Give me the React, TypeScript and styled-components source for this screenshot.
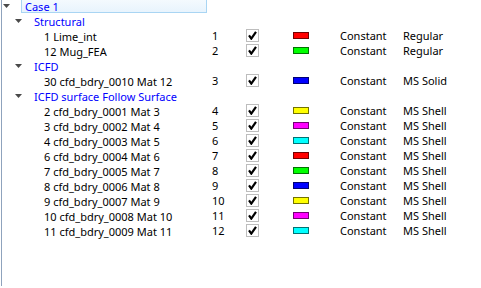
import React from 'react';
import styled, { createGlobalStyle } from 'styled-components';

const GlobalStyle = createGlobalStyle`
  html, body {
    margin: 0;
    padding: 0;
    background: #ffffff;
    overflow: hidden;
  }
  body {
    font-family: "Noto Sans", "Open Sans", sans-serif;
    font-size: 11px;
  }
`;

type Row = {
  level: number;
  label: string;
  expandable?: boolean;
  selected?: boolean;
  id?: number;
  color?: string;
  kind?: string;
};

const rows: Row[] = [
  { level: 0, label: 'Case 1', expandable: true, selected: true },
  { level: 1, label: 'Structural', expandable: true },
  { level: 2, label: '1 Lime_int', id: 1, color: '#ff0000', kind: 'Regular' },
  { level: 2, label: '12 Mug_FEA', id: 2, color: '#00ff00', kind: 'Regular' },
  { level: 1, label: 'ICFD', expandable: true },
  { level: 2, label: '30 cfd_bdry_0010 Mat 12', id: 3, color: '#0000ff', kind: 'MS Solid' },
  { level: 1, label: 'ICFD surface Follow Surface', expandable: true },
  { level: 2, label: '2 cfd_bdry_0001 Mat 3', id: 4, color: '#ffff00', kind: 'MS Shell' },
  { level: 2, label: '3 cfd_bdry_0002 Mat 4', id: 5, color: '#ff00ff', kind: 'MS Shell' },
  { level: 2, label: '4 cfd_bdry_0003 Mat 5', id: 6, color: '#00ffff', kind: 'MS Shell' },
  { level: 2, label: '6 cfd_bdry_0004 Mat 6', id: 7, color: '#ff0000', kind: 'MS Shell' },
  { level: 2, label: '7 cfd_bdry_0005 Mat 7', id: 8, color: '#00ff00', kind: 'MS Shell' },
  { level: 2, label: '8 cfd_bdry_0006 Mat 8', id: 9, color: '#0000ff', kind: 'MS Shell' },
  { level: 2, label: '9 cfd_bdry_0007 Mat 9', id: 10, color: '#ffff00', kind: 'MS Shell' },
  { level: 2, label: '10 cfd_bdry_0008 Mat 10', id: 11, color: '#ff00ff', kind: 'MS Shell' },
  { level: 2, label: '11 cfd_bdry_0009 Mat 11', id: 12, color: '#00ffff', kind: 'MS Shell' },
];

const Tree = styled.div`
  margin-left: 1px;
  height: 288px;
  border-left: 1px solid #8fa3bd;
  box-sizing: border-box;
`;

const Rows = styled.div`
  margin-top: -2px;
  display: flex;
  flex-direction: column;
`;

const RowLine = styled.div`
  display: grid;
  grid-template-columns: 210px 34px 47px 47px 63px 1fr;
  height: 15px;
  align-items: center;
  white-space: nowrap;
`;

const indent = [1, 13, 38];
const toggleWidth = [18, 15, 0];

const NameCell = styled.div<{ $level: number }>`
  display: flex;
  align-items: center;
  height: 15px;
  padding-left: ${({ $level }) => indent[$level]}px;
  padding-right: 5px;
`;

const Toggle = styled.span<{ $level: number }>`
  width: ${({ $level }) => toggleWidth[$level]}px;
  flex: none;
  display: flex;
  align-items: center;
  svg {
    display: block;
  }
`;

const Label = styled.span<{ $selected?: boolean; $group?: boolean }>`
  flex: ${({ $selected }) => ($selected ? '1' : 'none')};
  box-sizing: border-box;
  height: 14px;
  line-height: 13px;
  padding: 0 3px;
  color: ${({ $group }) => ($group ? '#0000ff' : '#000000')};
  background: ${({ $selected }) => ($selected ? 'linear-gradient(#f4fafe, #e8f4fd)' : 'transparent')};
  border: 1px solid ${({ $selected }) => ($selected ? '#a9d5f3' : 'transparent')};
  border-left-width: ${({ $selected }) => ($selected ? '1px' : '0')};
  margin-left: ${({ $selected }) => ($selected ? '0' : '1px')};
`;

const Cell = styled.div`
  color: #000000;
  line-height: 15px;
`;

const CheckBox = styled.span`
  display: flex;
  align-items: center;
  justify-content: center;
  width: 13px;
  height: 13px;
  box-sizing: border-box;
  border: 1px solid #bdbdbd;
  background: #ffffff;
`;

const Swatch = styled.span<{ $color: string }>`
  display: block;
  width: 16px;
  height: 7px;
  box-sizing: border-box;
  background: ${({ $color }) => $color};
  border: 1px solid rgba(0, 0, 0, 0.55);
`;

const Arrow = () => (
  <svg width="7" height="4" viewBox="0 0 7 4">
    <path d="M0 0 H7 L3.5 4 Z" fill="#4a4a4a" />
  </svg>
);

const Check = () => (
  <svg width="9" height="9" viewBox="0 0 9 9">
    <path d="M1 4.4 L3.3 7.6 L8 0.8" fill="none" stroke="#000" strokeWidth="2.2" />
  </svg>
);

const App: React.FC = () => (
  <>
    <GlobalStyle />
    <Tree>
      <Rows>
        {rows.map((row, i) => (
          <RowLine key={i}>
            <NameCell $level={row.level}>
              <Toggle $level={row.level}>{row.expandable && <Arrow />}</Toggle>
              <Label $selected={row.selected} $group={row.expandable}>
                {row.label}
              </Label>
            </NameCell>
            {row.id !== undefined && (
              <>
                <Cell>{row.id}</Cell>
                <Cell>
                  <CheckBox>
                    <Check />
                  </CheckBox>
                </Cell>
                <Cell>
                  <Swatch $color={row.color!} />
                </Cell>
                <Cell>Constant</Cell>
                <Cell>{row.kind}</Cell>
              </>
            )}
          </RowLine>
        ))}
      </Rows>
    </Tree>
  </>
);

export default App;
